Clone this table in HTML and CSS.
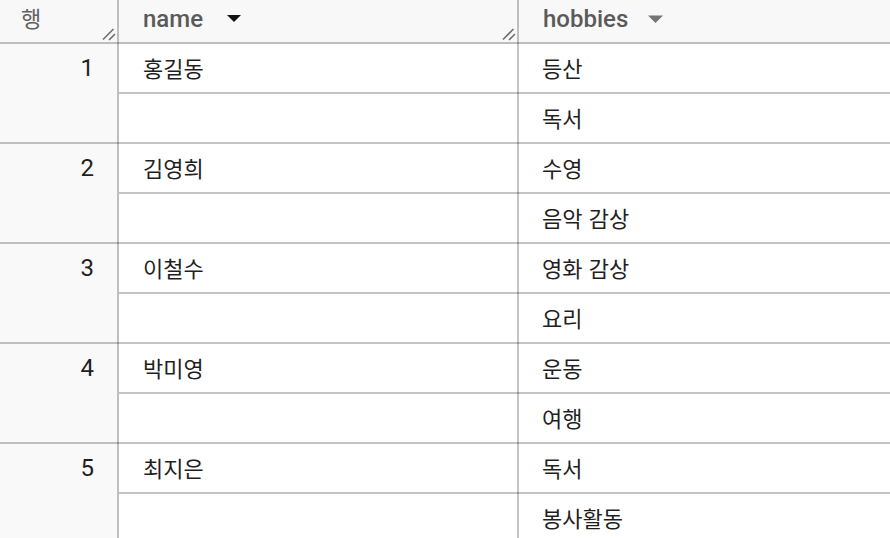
FILE: index.html
```html
<!DOCTYPE html>
<html lang="ko">
<head>
<meta charset="utf-8">
<link rel="stylesheet" href="styles.css">
</head>
<body>
<div class="grid">
  <div class="hcell hnum"><span class="hlabel">행</span><svg class="resize" width="14" height="14" viewBox="0 0 14 14"><path d="M1 12.5 L11.5 2 M7 13 L13 7" stroke="#6f6f6f" stroke-width="1.6" fill="none"/></svg></div>
  <div class="hcell"><span class="htext">name</span><svg class="caret" width="14" height="8" viewBox="0 0 14 8"><path d="M0 0 H14 L7 7 Z" fill="#111"/></svg><svg class="resize" width="14" height="14" viewBox="0 0 14 14"><path d="M1 12.5 L11.5 2 M7 13 L13 7" stroke="#6f6f6f" stroke-width="1.6" fill="none"/></svg></div>
  <div class="hcell last"><span class="htext">hobbies</span><svg class="caret" width="15" height="9" viewBox="0 0 15 9"><path d="M0 0.5 H15 L7.5 8 Z" fill="#757575"/></svg></div>

  <div class="num first">1</div><div class="cell">홍길동</div><div class="cell last">등산</div>
  <div class="num"></div><div class="cell"></div><div class="cell last">독서</div>

  <div class="num first">2</div><div class="cell">김영희</div><div class="cell last">수영</div>
  <div class="num"></div><div class="cell"></div><div class="cell last">음악 감상</div>

  <div class="num first">3</div><div class="cell">이철수</div><div class="cell last">영화 감상</div>
  <div class="num"></div><div class="cell"></div><div class="cell last">요리</div>

  <div class="num first">4</div><div class="cell">박미영</div><div class="cell last">운동</div>
  <div class="num"></div><div class="cell"></div><div class="cell last">여행</div>

  <div class="num first">5</div><div class="cell">최지은</div><div class="cell last">독서</div>
  <div class="num"></div><div class="cell"></div><div class="cell last">봉사활동</div>
</div>
</body>
</html>
```

FILE: styles.css
```css
html, body {
  margin: 0;
  padding: 0;
  background: #ffffff;
  overflow: hidden;
}
.grid {
  display: grid;
  grid-template-columns: 119px 400px 1fr;
  grid-template-rows: 44px;
  grid-auto-rows: 50px;
  width: 890px;
}
.hcell {
  position: relative;
  display: flex;
  align-items: center;
  padding-left: 24px;
  padding-bottom: 2px;
  background: #f8f8f8;
  box-shadow: inset -2px 0 rgba(0,0,0,0.23), inset 0 -2px rgba(0,0,0,0.23);
  font-family: Roboto, "Noto Sans CJK KR", sans-serif;
  font-size: 24px;
  font-weight: 500;
  color: #5a5a5a;
}
.hcell.last {
  box-shadow: inset 0 -2px rgba(0,0,0,0.23);
}
.hnum {
  padding-left: 21px;
  align-items: flex-start;
  padding-top: 2px;
}
.hlabel {
  font-family: "Noto Sans CJK KR", sans-serif;
  font-size: 22px;
  font-weight: 400;
  color: #616161;
  line-height: 30px;
}
.htext {
  line-height: 28px;
  margin-top: -4px;
}
.caret {
  margin-left: 24px;
  margin-top: -4px;
}
.hcell.last .caret {
  margin-left: 20px;
}
.resize {
  position: absolute;
  right: 3px;
  bottom: 3px;
}
.num {
  display: flex;
  align-items: center;
  justify-content: flex-end;
  padding-right: 25px;
  padding-bottom: 3px;
  background: #f9f9f9;
  box-shadow: inset -2px 0 rgba(0,0,0,0.23), inset 0 -2px rgba(0,0,0,0.23);
  font-family: Roboto, sans-serif;
  font-size: 24px;
  color: #1f1f1f;
}
.num.first {
  box-shadow: inset -2px 0 rgba(0,0,0,0.23), inset 0 -2px #f9f9f9, inset 0 -1px #ffffff;
}
.cell {
  display: flex;
  align-items: center;
  padding-left: 24px;
  padding-bottom: 5px;
  box-shadow: inset -2px 0 rgba(0,0,0,0.23), inset 0 -2px rgba(0,0,0,0.23);
  font-family: "Noto Sans CJK KR", sans-serif;
  font-size: 22px;
  color: #1f1f1f;
  white-space: pre;
}
.cell.last {
  padding-left: 23px;
  box-shadow: inset 0 -2px rgba(0,0,0,0.23);
}
```
